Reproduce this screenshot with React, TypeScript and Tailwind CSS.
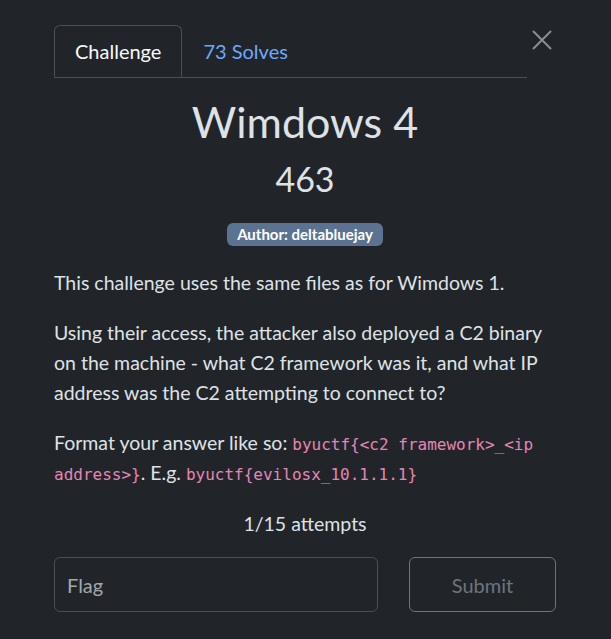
export default function App() {
  return (
    <div className="min-h-screen w-full bg-[#212529] font-['Lato',sans-serif] text-[#dee2e6]">
      <div className="relative w-[611px] pl-[54px] pr-[55px] pt-[25px]">
        {/* close */}
        <button className="absolute left-[532px] top-[30px] h-[20px] w-[20px] text-[#8b8e92]">
          <svg viewBox="0 0 20 20" width="20" height="20" fill="none" stroke="currentColor" strokeWidth="2">
            <path d="M1 1 L19 19 M19 1 L1 19" />
          </svg>
        </button>

        {/* tabs */}
        <div className="mr-[29px] flex border-b border-[#495057]">
          <div className="-mb-px flex h-[52px] items-center rounded-t-[6px] border border-[#495057] border-b-[#212529] bg-[#212529] px-[20px] text-[20px] text-[#f8f9fa]">
            Challenge
          </div>
          <div className="flex h-[52px] items-center border border-transparent px-[20px] text-[20px] text-[#6ea8fe]">
            73 Solves
          </div>
        </div>

        <h3 className="mt-[19px] text-center text-[43px] font-normal leading-[50px] text-[#dee2e6]">Wimdows 4</h3>
        <h4 className="mt-[11px] text-center text-[34px] font-normal leading-[41px] text-[#dee2e6]">463</h4>

        <div className="mt-[24px] flex justify-center">
          <span className="flex h-[23px] items-center rounded-[6px] bg-[#5b7290] px-[10px] text-[15px] font-bold text-white">
            Author: deltabluejay
          </span>
        </div>

        <div className="mt-[22px] text-[19.5px] leading-[30px]">
          <p>This challenge uses the same files as for Wimdows 1.</p>
          <p className="mt-[20px]">
            Using their access, the attacker also deployed a C2 binary on the machine - what C2 framework was it, and
            what IP address was the C2 attempting to connect to?
          </p>
          <p className="mt-[20px]">
            Format your answer like so:{" "}
            <code className="font-['DejaVu_Sans_Mono',monospace] text-[16px] leading-none text-[#e685b5]">
              byuctf{"{"}&lt;c2 framework&gt;_&lt;ip address&gt;{"}"}
            </code>
            . E.g.{" "}
            <code className="font-['DejaVu_Sans_Mono',monospace] text-[16px] leading-none text-[#e685b5]">
              byuctf{"{"}evilosx_10.1.1.1{"}"}
            </code>
          </p>
        </div>

        <p className="mt-[22px] text-center text-[19.5px] leading-[27px]">1/15 attempts</p>

        <div className="mt-[20px] flex justify-between">
          <input
            placeholder="Flag"
            className="h-[55px] w-[324px] rounded-[6px] border border-[#495057] bg-[#212529] px-[12px] text-[20px] text-[#dee2e6] outline-none placeholder:text-[#a3a7ab]"
          />
          <button className="h-[55px] w-[147px] rounded-[6px] border border-[#6c757d] text-[20px] text-[#6c757d]">
            Submit
          </button>
        </div>
      </div>
    </div>
  )
}
